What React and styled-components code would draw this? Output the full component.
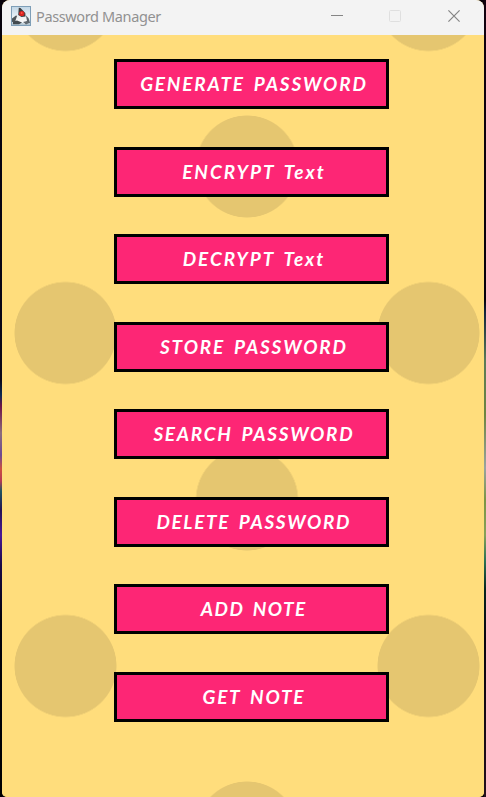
import React from "react";
import styled, { createGlobalStyle } from "styled-components";

const GlobalStyle = createGlobalStyle`
  * { box-sizing: border-box; }
  body { margin: 0; overflow: hidden; }
`;

const Desktop = styled.div`
  display: flex;
  width: 486px;
  height: 797px;
  padding: 0 2px 0 2px;
  background:
    linear-gradient(180deg, #12020f 0, #07020c 300px, #14243c 312px, #5c7a58 360px, #6f8440 415px, #9aa3a0 468px, #7d9444 500px, #88a058 535px, #2f7355 560px, #06241f 590px, #0a0510 640px, #24101c 797px) right / 2px 100% no-repeat,
    linear-gradient(180deg, #06020a 0, #0b0718 380px, #0d2a52 395px, #6d1547 406px, #8d6c7c 433px, #6d4a92 455px, #cc5040 469px, #b53a55 481px, #215560 491px, #241353 510px, #4a1897 535px, #190a47 565px, #04020c 620px, #000 797px) left / 2px 100% no-repeat,
    #09020a;
`;

const Window = styled.main`
  display: flex;
  flex-direction: column;
  width: 482px;
  border-radius: 8px 8px 5px 5px;
  overflow: hidden;
  background: #ffdd7c;
`;

const TitleBar = styled.header`
  display: flex;
  align-items: center;
  flex: 0 0 35px;
  padding: 0 1px 3px 9px;
  background: #f3f3f3;
`;

const Title = styled.h1`
  flex: 1;
  margin: 0 0 0 5px;
  font: 400 14.5px/20px "Segoe UI", "Noto Sans", sans-serif;
  letter-spacing: -0.37px;
  color: #919191;
`;

const Controls = styled.div`
  display: flex;
  height: 32px;
`;

const Control = styled.button`
  display: grid;
  place-items: center;
  width: 58.5px;
  padding: 0;
  border: 0;
  background: none;
  color: ${(p) => (p.$disabled ? "#dfdfdf" : "#858585")};
`;

const Content = styled.section`
  flex: 1;
  display: flex;
  flex-direction: column;
  align-items: center;
  gap: 37.5px;
  padding: 24px 0 0 17px;
  background-color: #ffdd7c;
  background-image:
    radial-gradient(circle at 50% 50%, #e5c670 50.7px, transparent 51.3px),
    radial-gradient(circle at 50% 50%, #e5c670 50.7px, transparent 51.3px);
  background-size: 363px 333px;
  background-position: -118px -201.5px, 63.5px -35px;
`;

const MenuButton = styled.button`
  display: flex;
  align-items: center;
  justify-content: center;
  flex: 0 0 50px;
  width: 275px;
  padding: 0 0 0 3px;
  border: 3px solid #000;
  background: #fd2675;
  color: #fff;
  font: italic 700 19px/24px "Ink Free", Lato, sans-serif;
  white-space: pre;
`;

const Label = styled.span`
  letter-spacing: ${(p) => p.$spacing}px;
  margin-right: ${(p) => -p.$spacing}px;
  word-spacing: 3px;
`;

const ACTIONS = [
  { label: "GENERATE PASSWORD", spacing: 1.82 },
  { label: "ENCRYPT Text", spacing: 2 },
  { label: "DECRYPT Text", spacing: 1.95 },
  { label: "STORE PASSWORD", spacing: 1.82 },
  { label: "SEARCH PASSWORD", spacing: 1.7 },
  { label: "DELETE PASSWORD", spacing: 1.63 },
  { label: "ADD NOTE", spacing: 1.4 },
  { label: "GET NOTE", spacing: 1.8 },
];

function DukeIcon() {
  return (
    <svg width="20" height="20" viewBox="0 0 20 20" aria-hidden="true">
      <defs>
        <linearGradient id="sky" x2="0" y2="1">
          <stop stopColor="#c0d5e5" />
          <stop offset=".6" stopColor="#eef5f9" />
          <stop offset="1" stopColor="#a9bdca" />
        </linearGradient>
        <linearGradient id="body" x2="0" y2="1">
          <stop stopColor="#d5d9dc" />
          <stop offset="1" stopColor="#fff" />
        </linearGradient>
      </defs>
      <rect x=".5" y=".5" width="19" height="19" fill="url(#sky)" stroke="#7e9eb7" />
      <path d="M1 12.5 5 9.5l3 1-2 5-5 .5z" fill="#4f565b" />
      <path d="M14 8.5l3.5 3.5 1.5 5h-4l-2-2z" fill="#596269" />
      <path d="M8 1.5 9.5 2l5 5 1.5 8-2 3-4-2-4 2-2-2 3-9z" fill="url(#body)" />
      <path d="M7.8 1.8 9.5 2l4.8 5 .2 3.5-4 .5-3.3-2z" fill="#3b3e42" />
      <path d="M2 15.5l4-1 5 2-3 1.8H2z" fill="#42494e" />
      <path d="m12 16 4-1 2 2-3 1.5z" fill="#626a70" />
      <circle cx="10.8" cy="7.5" r="2.6" fill="#d9231f" />
      <circle cx="10.7" cy="7" r=".9" fill="#ff5148" />
    </svg>
  );
}

export default function App() {
  return (
    <>
      <GlobalStyle />
      <Desktop>
        <Window>
          <TitleBar>
            <DukeIcon />
            <Title>Password Manager</Title>
            <Controls>
              <Control aria-label="Minimize">
                <svg width="12" height="12" fill="none" stroke="currentColor"><path d="M0 5.5h12" /></svg>
              </Control>
              <Control aria-label="Maximize" $disabled disabled>
                <svg width="12" height="12" fill="none" stroke="currentColor"><rect x=".5" y=".5" width="11" height="11" rx="1" /></svg>
              </Control>
              <Control aria-label="Close">
                <svg width="12" height="12" fill="none" stroke="currentColor" strokeWidth="1.2"><path d="m.4.4 11.2 11.2M11.6.4.4 11.6" /></svg>
              </Control>
            </Controls>
          </TitleBar>
          <Content>
            {ACTIONS.map(({ label, spacing }) => (
              <MenuButton key={label}>
                <Label $spacing={spacing}>{label}</Label>
              </MenuButton>
            ))}
          </Content>
        </Window>
      </Desktop>
    </>
  );
}
